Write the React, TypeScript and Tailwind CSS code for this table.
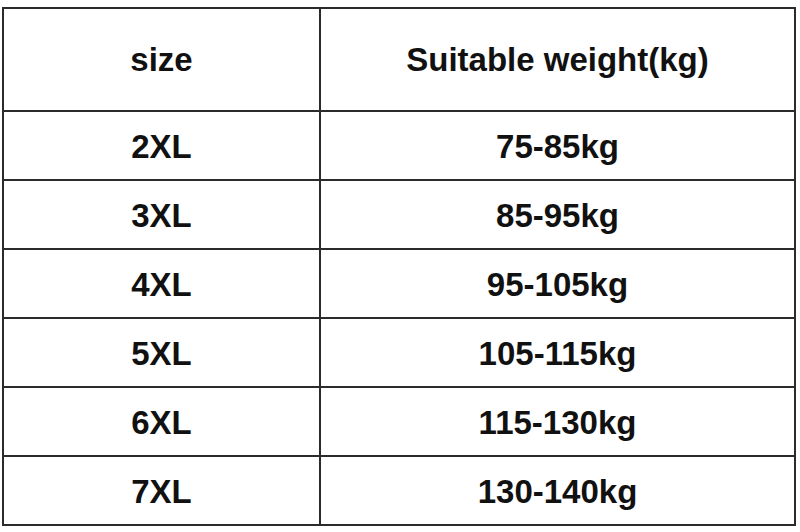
const rows = [
  { size: '2XL', weight: '75-85kg' },
  { size: '3XL', weight: '85-95kg' },
  { size: '4XL', weight: '95-105kg' },
  { size: '5XL', weight: '105-115kg' },
  { size: '6XL', weight: '115-130kg' },
  { size: '7XL', weight: '130-140kg' },
]

export default function App() {
  return (
    <div className="w-[800px] h-[532px] bg-white pt-[7px] pl-[2px]" style={{ fontFamily: '"Liberation Sans", Arial, sans-serif' }}>
      <div className="w-[794px] border-2 border-[#2b2b2b] text-[33px] font-bold text-[#111]">
        <div className="grid grid-cols-[317px_1fr] h-[101px]">
          <div className="flex items-center justify-center border-r-2 border-[#2b2b2b]">size</div>
          <div className="flex items-center justify-center">Suitable weight(kg)</div>
        </div>
        {rows.map((r) => (
          <div key={r.size} className="grid grid-cols-[317px_1fr] h-[69px] border-t-2 border-[#2b2b2b]">
            <div className="flex items-center justify-center pt-[2px] border-r-2 border-[#2b2b2b]">{r.size}</div>
            <div className="flex items-center justify-center pt-[2px]">{r.weight}</div>
          </div>
        ))}
      </div>
    </div>
  )
}
